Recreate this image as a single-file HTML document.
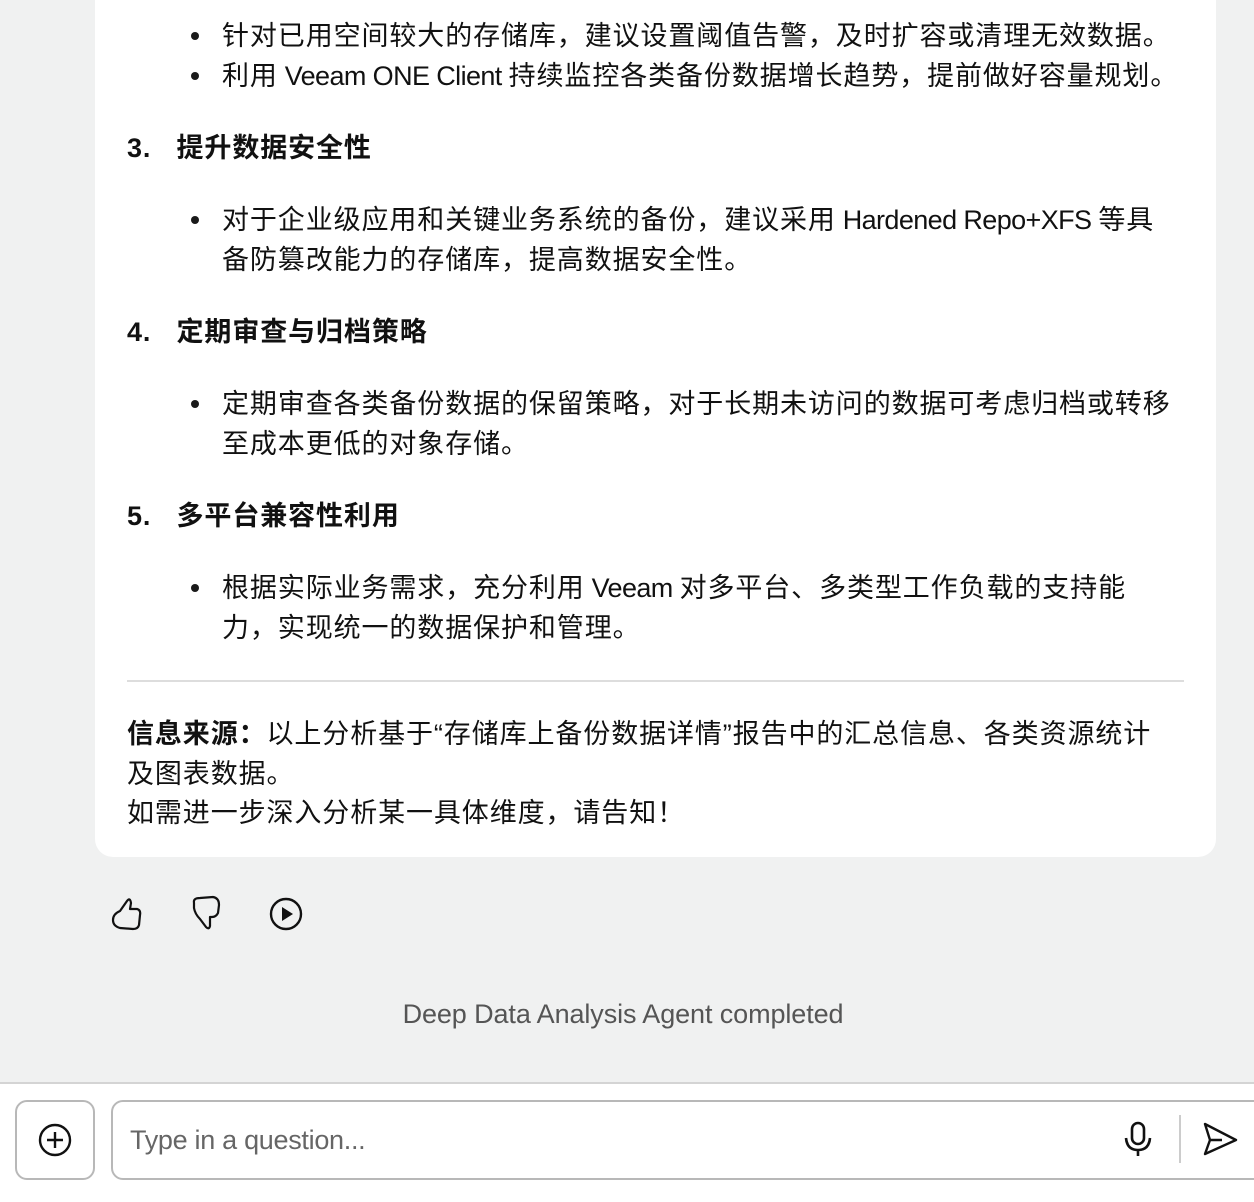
<!DOCTYPE html>
<html><head><meta charset="utf-8"><style>
body{margin:0;width:1254px;height:1200px;background:#f0f1f1;position:relative;overflow:hidden;font-family:"Liberation Sans","Noto Sans CJK SC",sans-serif;color:#111}
.card{position:absolute;left:95px;top:-30px;width:1121px;height:887px;background:#fff;border-radius:18px}
.t{position:absolute;font-size:27px;white-space:nowrap;line-height:40px;letter-spacing:0.9px}
.l{letter-spacing:-0.6px}
.b{font-weight:bold}
.dot{position:absolute;width:8px;height:8px;border-radius:50%;background:#1a1a1a}
.hr{position:absolute;left:127px;top:680px;width:1057px;height:2px;background:#ddd}
.bottom{position:absolute;left:0;top:1082px;width:1254px;height:118px;background:#fff;border-top:2px solid #d4d4d4}
.box{position:absolute;border:2px solid #b8b8b8;border-radius:12px;background:#fff}
</style></head><body>
<div class="card"></div>
<div class="dot" style="left:191px;top:32px"></div><div class="t" style="left:222px;top:16px">针对已用空间较大的存储库，建议设置阈值告警，及时扩容或清理无效数据。</div>
<div class="dot" style="left:191px;top:72px"></div><div class="t" style="left:222px;top:56px">利用<span class="l"> Veeam ONE Client </span>持续监控各类备份数据增长趋势，提前做好容量规划。</div>
<div class="t b" style="left:127px;top:128px">3.&nbsp;&nbsp; 提升数据安全性</div>
<div class="dot" style="left:191px;top:216px"></div><div class="t" style="left:222px;top:200px">对于企业级应用和关键业务系统的备份，建议采用<span class="l"> Hardened Repo+XFS </span>等具</div>
<div class="t" style="left:222px;top:240px">备防篡改能力的存储库，提高数据安全性。</div>
<div class="t b" style="left:127px;top:312px">4.&nbsp;&nbsp; 定期审查与归档策略</div>
<div class="dot" style="left:191px;top:400px"></div><div class="t" style="left:222px;top:384px">定期审查各类备份数据的保留策略，对于长期未访问的数据可考虑归档或转移</div>
<div class="t" style="left:222px;top:424px">至成本更低的对象存储。</div>
<div class="t b" style="left:127px;top:496px">5.&nbsp;&nbsp; 多平台兼容性利用</div>
<div class="dot" style="left:191px;top:584px"></div><div class="t" style="left:222px;top:568px">根据实际业务需求，充分利用<span class="l"> Veeam </span>对多平台、多类型工作负载的支持能</div>
<div class="t" style="left:222px;top:608px">力，实现统一的数据保护和管理。</div>
<div class="hr"></div>
<div class="t" style="left:127px;top:714px"><b>信息来源：</b>以上分析基于“存储库上备份数据详情”报告中的汇总信息、各类资源统计</div>
<div class="t" style="left:127px;top:754px">及图表数据。</div>
<div class="t" style="left:127px;top:793px">如需进一步深入分析某一具体维度，请告知！</div>
<svg style="position:absolute;left:108px;top:893px" width="40" height="40" viewBox="0 0 40 40" fill="none" stroke="#111" stroke-width="2.2" stroke-linejoin="round"><path d="M12 18 L19 8 Q22 4 23 10 L22 16 L29 16 Q33 17 32 22 L31 32 Q30 36 25 36 L12 35 Q5 33 5 27 Q5 21 12 18Z"/></svg>
<svg style="position:absolute;left:188px;top:893px" width="40" height="40" viewBox="0 0 40 40" fill="none" stroke="#111" stroke-width="2.2" stroke-linejoin="round"><path d="M6 10 Q5 5 12 5 L25 4 Q31 5 31 12 L30 20 Q28 24 24 24 L22 24 L22 33 Q21 37 18 34 L12 26 Q7 21 6 15Z"/></svg>
<svg style="position:absolute;left:268px;top:896px" width="36" height="36" viewBox="0 0 36 36"><circle cx="18" cy="18" r="15" fill="none" stroke="#111" stroke-width="2.4"/><path d="M14 11 L25 18 L14 25Z" fill="#111"/></svg>
<div class="t" style="left:0;width:1246px;text-align:center;top:994px;color:#555;letter-spacing:-0.1px">Deep Data Analysis Agent completed</div>
<div class="bottom"></div>
<div class="box" style="left:15px;top:1100px;width:76px;height:76px"></div>
<svg style="position:absolute;left:37px;top:1122px" width="36" height="36" viewBox="0 0 36 36" fill="none" stroke="#111" stroke-width="2.4"><circle cx="18" cy="18" r="15"/><path d="M18 10V26M10 18H26"/></svg>
<div class="box" style="left:111px;top:1100px;width:1160px;height:76px"></div>
<div class="t" style="left:130px;top:1120px;color:#666;letter-spacing:-0.3px">Type in a question...</div>
<svg style="position:absolute;left:1122px;top:1120px" width="32" height="40" viewBox="0 0 32 40" fill="none" stroke="#111" stroke-width="2.6"><rect x="10" y="3" width="12" height="21" rx="6"/><path d="M4 18 Q5 30 16 30 Q27 30 28 18M16 30V36"/></svg>
<div style="position:absolute;left:1179px;top:1115px;width:2px;height:48px;background:#ccc"></div>
<svg style="position:absolute;left:1200px;top:1120px" width="40" height="40" viewBox="0 0 40 40" fill="none" stroke="#111" stroke-width="2.4" stroke-linejoin="round"><path d="M5 4 L36 20 L5 34 L10 20Z M10 20H22"/></svg>
</body></html>
